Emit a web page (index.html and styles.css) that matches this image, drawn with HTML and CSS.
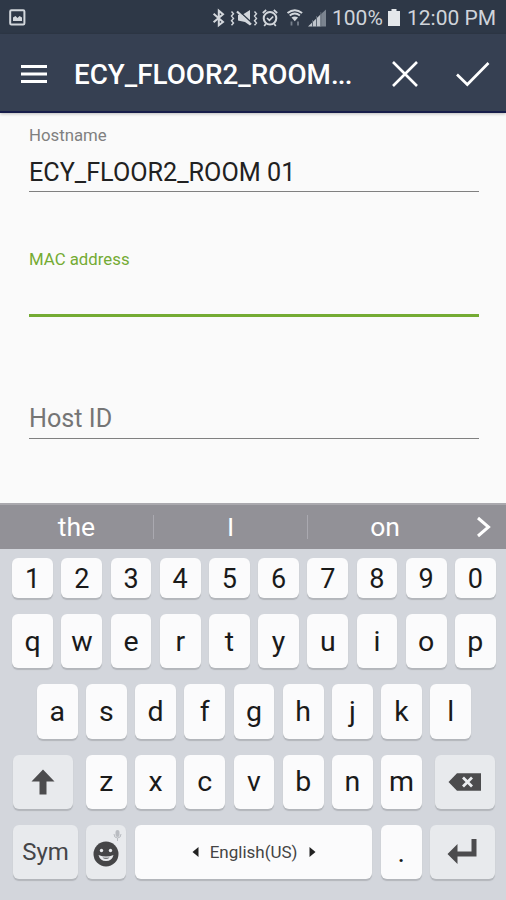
FILE: index.html
```html
<!DOCTYPE html>
<html lang="en">
<head>
    <meta charset="UTF-8">
    <meta name="viewport" content="width=device-width, initial-scale=1.0">
    <title>Edit device</title>
    <link rel="stylesheet" href="styles.css">
</head>
<body>
    <div class="status-bar">
        <svg class="status-picture" width="17" height="17" viewBox="0 0 17 17">
            <rect x="1.2" y="1.2" width="14.2" height="14.2" rx="1.2" fill="none" stroke="#d3d7dc" stroke-width="2"/>
            <path d="M4 12V8.500l2.500-1.500 2 2 2-2L13 8.500V12z" fill="#d3d7dc"/>
        </svg>
        <div class="status-icons">
            <svg width="114" height="20" viewBox="212 7 114 20">
                <g fill="none" stroke="#d3d7dc">
                    <path d="M213.6 12.8l9.4 8.2-4.2 3.3V9.7l4.2 3.5-9.4 8" stroke-width="2"/>
                    <path d="M231.5 10.5l2 2.300-2 2.300 2 2.300-2 2.300 2 2.300-2 2.300M254.500 10.5l2 2.300-2 2.300 2 2.300-2 2.300 2 2.300-2 2.300" stroke-width="1.4"/>
                    <circle cx="270" cy="17.3" r="6.3" stroke-width="2"/>
                    <path d="M267 17l2.4 2.3 3.8-3.8M262.8 12l3.4-3M273.8 9l3.4 3M265.8 23l-1.6 2M274.2 23l1.6 2" stroke-width="1.7"/>
                    <path d="M287.500 12q7.300-5.500 14.600 0M289.700 14.500q5.100-3.800 10.200 0" stroke-width="2"/>
                </g>
                <path d="M242 14l8-5v15.500l-5-3.500-7-1.500v-5.500z" fill="#d3d7dc"/>
                <path d="M239.500 10.500l12.500 11.500" stroke="#2e3847" stroke-width="1.500"/>
                <path d="M237 10.500l14 13" stroke="#d3d7dc" stroke-width="2.200"/>
                <path d="M291.500 16.500q3.300-2 6.600 0l-3.300 3.800z" fill="#d3d7dc"/>
                <path d="M291.500 24.500v-4M298 20.500v4" fill="none" stroke="#78818d" stroke-width="1.800"/>
                <path d="M308 25.500L321 13v12.500z" fill="#c0c5cc"/>
                <path d="M321 13l5-4.500v17h-5z" fill="#7b848f"/>
                <path d="M312.500 19v7M316.500 15v11M320.800 11v15" stroke="#5a6471"/>
            </svg>
            <span class="battery-level">100%</span>
            <svg class="battery" width="12" height="17" viewBox="0 0 12 17">
                <path d="M3.500 0h5v2H12v15H0V2h3.500z" fill="#e4e7ea"/>
            </svg>
            <span class="clock">12:00 PM</span>
        </div>
    </div>

    <header class="app-bar">
        <svg class="menu-icon" width="28" height="20" viewBox="0 0 28 20">
            <path d="M1 2.500h26M1 10h26M1 17.500h26" stroke="#fff" stroke-width="3"/>
        </svg>
        <h1 class="title">ECY_FLOOR2_ROOM<span class="dots">...</span></h1>
        <svg class="close-icon" width="28" height="28" viewBox="0 0 28 28">
            <path d="M2 2l24 24M26 2L2 26" stroke="#fff" stroke-width="2.600"/>
        </svg>
        <svg class="check-icon" width="34" height="26" viewBox="0 0 34 26">
            <path d="M1 13.500l10.300 10L32.500 2" fill="none" stroke="#fff" stroke-width="2.700"/>
        </svg>
    </header>

    <main class="form">
        <div class="field hostname">
            <label class="label">Hostname</label>
            <div class="value">ECY_FLOOR2_ROOM 01</div>
        </div>
        <div class="field mac active">
            <label class="label">MAC address</label>
            <div class="value"></div>
        </div>
        <div class="field host-id">
            <div class="value placeholder">Host ID</div>
        </div>
    </main>

    <div class="suggestions">
        <span class="word">the</span>
        <span class="word">I</span>
        <span class="word">on</span>
        <svg class="more" width="16" height="22" viewBox="0 0 16 22">
            <path d="M2 2l10.500 9L2 20" fill="none" stroke="#fff" stroke-width="3"/>
        </svg>
    </div>

    <div class="keyboard">
        <div class="row numbers">
            <span class="key">1</span>
            <span class="key">2</span>
            <span class="key">3</span>
            <span class="key">4</span>
            <span class="key">5</span>
            <span class="key">6</span>
            <span class="key">7</span>
            <span class="key">8</span>
            <span class="key">9</span>
            <span class="key">0</span>
        </div>
        <div class="row">
            <span class="key">q</span>
            <span class="key">w</span>
            <span class="key">e</span>
            <span class="key">r</span>
            <span class="key">t</span>
            <span class="key">y</span>
            <span class="key">u</span>
            <span class="key">i</span>
            <span class="key">o</span>
            <span class="key">p</span>
        </div>
        <div class="row">
            <span class="key">a</span>
            <span class="key">s</span>
            <span class="key">d</span>
            <span class="key">f</span>
            <span class="key">g</span>
            <span class="key">h</span>
            <span class="key">j</span>
            <span class="key">k</span>
            <span class="key">l</span>
        </div>
        <div class="row">
            <span class="key special shift">
                <svg width="24" height="26" viewBox="0 0 24 26">
                    <path d="M12 0.500L23.500 12.500H15.500V25.500H8.500V12.500H0.500z" fill="#4c4c4e"/>
                </svg>
            </span>
            <span class="key">z</span>
            <span class="key">x</span>
            <span class="key">c</span>
            <span class="key">v</span>
            <span class="key">b</span>
            <span class="key">n</span>
            <span class="key">m</span>
            <span class="key special backspace">
                <svg width="34" height="18" viewBox="0 0 34 18">
                    <path d="M0.500 9L9 0.300H33V17.700H9z" fill="#4c4c4e"/>
                    <path d="M15 4.500l9 9M24 4.500l-9 9" stroke="#eceef1" stroke-width="2.800"/>
                </svg>
            </span>
        </div>
        <div class="row">
            <span class="key special sym">Sym</span>
            <span class="key special emoji">
                <svg width="40" height="54" viewBox="0 0 40 54">
                    <rect x="29.500" y="5" width="4" height="7" rx="2" fill="#b9bcc1"/>
                    <path d="M28 9q0 4 3.500 4t3.500-4M31.500 13v3" fill="none" stroke="#b9bcc1"/>
                    <circle cx="20" cy="29" r="12.500" fill="#454547"/>
                    <circle cx="15.500" cy="25.500" r="1.700" fill="#e9ebee"/>
                    <circle cx="24.500" cy="25.500" r="1.700" fill="#e9ebee"/>
                    <path d="M12.500 30q7.500 3 15 0q-1.500 6-7.500 6T12.500 30z" fill="#e9ebee"/>
                    <path d="M16.500 32.500q3.500 0.700 7 0q-1 1.300-3.500 1.300t-3.500-1.300z" fill="#454547"/>
                </svg>
            </span>
            <span class="key space">
                <svg width="7" height="10" viewBox="0 0 7 10"><path d="M6.500 0v10L0.500 5z" fill="#222"/></svg>
                <span class="language">English(US)</span>
                <svg width="7" height="10" viewBox="0 0 7 10"><path d="M0.500 0v10l6-5z" fill="#222"/></svg>
            </span>
            <span class="key">.</span>
            <span class="key special enter">
                <svg width="30" height="28" viewBox="0 0 30 28">
                    <path d="M0.500 16L10.500 6V13.500H24.500V1H29.500V18.500H10.500V26z" fill="#4c4c4e"/>
                </svg>
            </span>
        </div>
    </div>
</body>
</html>
```

FILE: styles.css
```css
* {
    box-sizing: border-box;
}

body {
    font-family: Roboto, "Liberation Sans", sans-serif;
    background-color: #fafafa;
    margin: 0;
    width: 506px;
    height: 900px;
    overflow: hidden;
    display: flex;
    flex-direction: column;
}

svg {
    display: block;
    flex: none;
}

/* Status bar */
.status-bar {
    height: 34px;
    flex: none;
    display: flex;
    justify-content: space-between;
    align-items: center;
    padding: 1px 10px 0 9px;
    background-color: #2e3847;
    color: #d0d4da;
    font-size: 21px;
}

.status-icons {
    display: flex;
    align-items: center;
    white-space: nowrap;
}

.battery-level {
    width: 51px;
    margin-left: 6px;
}

.battery {
    margin: 0 7px 0 5px;
}

.clock {
    width: 89px;
}

/* App bar */
.app-bar {
    height: 79px;
    flex: none;
    display: flex;
    align-items: center;
    padding: 2px 16px 0 20px;
    background-color: #364052;
    border-bottom: 2px solid #171d4a;
    box-shadow: 0 1px 3px rgba(0, 0, 0, 0.25);
    color: #fff;
}

.title {
    width: 317px;
    margin: 2px 0 0 26px;
    font-size: 27.800px;
    font-weight: 500;
    line-height: 30px;
    white-space: nowrap;
}

.dots {
    letter-spacing: -0.800px;
}

.check-icon {
    margin-left: auto;
}

/* Form */
.form {
    height: 390px;
    flex: none;
    padding: 12px 27px 0 29px;
}

.label {
    display: block;
    height: 20px;
    line-height: 20px;
    font-size: 16.800px;
    color: #808080;
}

.value {
    height: 46.500px;
    padding-top: 12px;
    line-height: 32px;
    font-size: 25.200px;
    color: #212121;
    border-bottom: 1.500px solid #808080;
}

.mac {
    margin-top: 57px;
}

.host-id {
    margin-top: 75.500px;
}

.active .label {
    color: #74ab33;
}

.active .value {
    height: 48.500px;
    border-bottom: 3px solid #74ab33;
}

.placeholder {
    padding-top: 10px;
    color: #757575;
}

/* Word suggestions */
.suggestions {
    height: 46px;
    flex: none;
    display: grid;
    grid-template-columns: 154px 154px 154px 1fr;
    align-items: center;
    background-color: #929197;
    border-top: 2px solid #aaa9ae;
    color: #fff;
    font-size: 26.500px;
}

.word {
    text-align: center;
    line-height: 24px;
    border-right: 1px solid #aaa9b0;
}

.word:nth-child(3) {
    border-right: none;
}

.more {
    margin-left: 14px;
}

/* Keyboard */
.keyboard {
    flex: 1;
    padding-top: 9px;
    background-color: #d3d6dc;
    display: flex;
    flex-direction: column;
    gap: 16px;
}

.row {
    height: 54.300px;
    flex: none;
    display: flex;
    justify-content: center;
    gap: 8.400px;
    padding-left: 2px;
}

.numbers {
    height: 40px;
}

.key {
    width: 40.800px;
    flex: none;
    display: flex;
    align-items: center;
    justify-content: center;
    background-color: #fbfbfc;
    border-radius: 6px;
    box-shadow: 0 1.500px 1px #b3b6bb;
    color: #1a1a1a;
    font-size: 28.500px;
}

.numbers .key {
    padding-top: 2px;
    font-size: 27px;
}

.special {
    background-color: #e8eaed;
}

.shift {
    width: 60.500px;
    margin-right: 4.600px;
}

.backspace {
    width: 60.500px;
    margin-left: 4.600px;
}

.sym {
    width: 65px;
    color: #454547;
    font-size: 24px;
}

.emoji {
    width: 40px;
}

.space {
    width: 237.500px;
    gap: 11px;
}

.language {
    font-size: 17px;
    color: #444;
}

.enter {
    width: 65px;
}
```
